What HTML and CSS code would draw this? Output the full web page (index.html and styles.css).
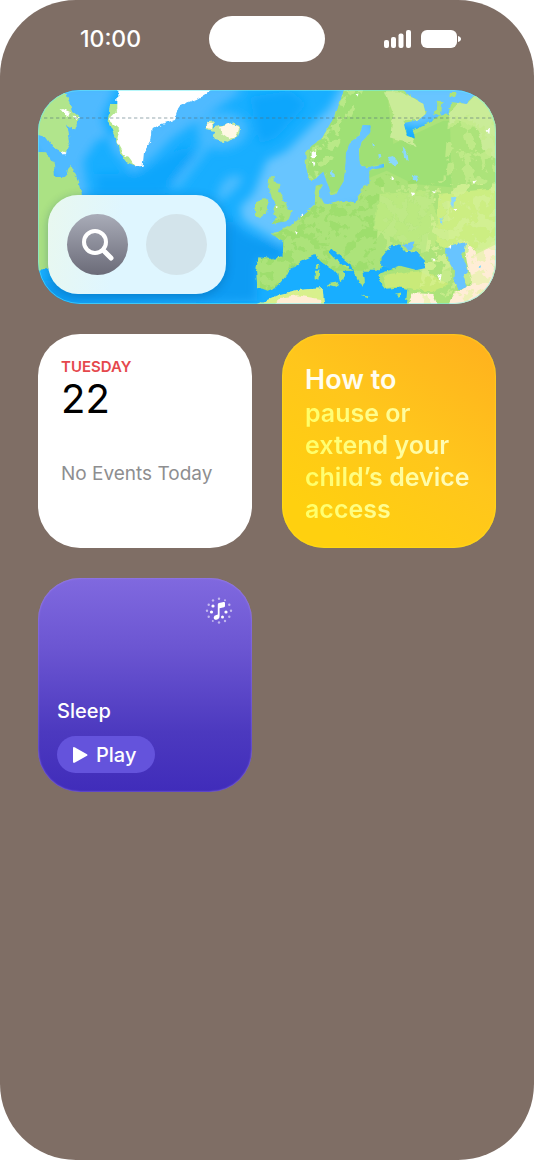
FILE: index.html
```html
<!DOCTYPE html>
<html lang="en">
<head>
    <meta charset="UTF-8">
    <meta name="viewport" content="width=device-width, initial-scale=1.0">
    <title>Today View</title>
    <link rel="stylesheet" href="styles.css">
</head>
<body>
    <div class="phone">
        <header class="status-bar">
            <time class="clock">10:00</time>
            <div class="island"></div>
            <div class="indicators">
                <svg width="28" height="20" viewBox="0 0 28 20" fill="#fff" aria-label="Signal">
                    <rect x="0" y="11" width="5" height="8" rx="2"/>
                    <rect x="7" y="8" width="5" height="11" rx="2"/>
                    <rect x="14.500" y="4.500" width="5" height="14.500" rx="2"/>
                    <rect x="22" y="1" width="5" height="18" rx="2"/>
                </svg>
                <svg width="40" height="20" viewBox="0 0 40 20" fill="#fff" aria-label="Battery">
                    <rect x="0" y="1" width="36" height="18" rx="6"/>
                    <path d="M37 7c4 1 4 5 0 6z"/>
                </svg>
            </div>
        </header>

        <main class="widgets">
            <section class="widget map">
                <svg class="map-art" viewBox="24 18 1374 642" preserveAspectRatio="none" aria-hidden="true">
                    <defs>
                        <filter id="soft" x="-10%" y="-10%" width="120%" height="120%">
                            <feGaussianBlur stdDeviation="14"/>
                        </filter>
                        <filter id="coast" x="-5%" y="-5%" width="110%" height="110%">
                            <feTurbulence type="fractalNoise" baseFrequency="0.05" numOctaves="3" seed="4"/>
                            <feDisplacementMap in="SourceGraphic" scale="15" xChannelSelector="R" yChannelSelector="G"/>
                        </filter>
                        <filter id="patches" x="0" y="0" width="100%" height="100%" color-interpolation-filters="sRGB">
                            <feTurbulence type="fractalNoise" baseFrequency="0.03" numOctaves="4" seed="8"/>
                            <feColorMatrix values="0 0 0 0 0  0 0 0 0 0  0 0 0 0 0  22 0 0 0 -11.5" result="noise"/>
                            <feComposite in="SourceGraphic" in2="noise" operator="in"/>
                        </filter>
                        <clipPath id="land">
                            <path id="europe" d="M948 0L930 55 915 95 895 130 875 165 845 185 826 208 828 250 838 285 855 285 880 262 890 290 905 332 922 325 940 292 945 255 948 205 960 175 985 155 998 122 1022 124 1022 145 995 175 987 210 990 240 1010 250 1065 238 1062 250 1018 260 1018 300 1000 305 990 335 975 355 935 350 905 360 875 354 865 325 878 300 858 305 852 340 855 362 820 395 785 420 750 440 725 452 760 470 758 520 725 525 685 520 678 560 682 608 712 620 740 608 765 580 775 560 800 545 815 530 855 512 870 530 895 550 925 568 930 592 945 580 940 560 968 560 940 545 915 525 895 505 905 492 930 515 960 540 980 580 995 608 1005 595 1000 560 1040 560 1058 545 1090 555 1045 570 1048 590 1065 612 1105 608 1132 615 1125 690H1430V60L1350 18 1330 40 1310 60 1265 55 1255 90 1225 96 1180 125 1150 140 1155 165 1130 155 1122 120 1160 112 1187 90 1180 60 1140 36 1100 0Z"/>
                            <path d="M718 280L735 280 730 295 748 300 745 320 765 350 775 375 785 382 775 410 725 420 742 400 725 390 738 365 722 330 715 305Z"/>
                            <path d="M705 342L714 350 710 385 690 402 675 395 675 355 690 345Z"/>
                        </clipPath>
                    </defs>
                    <rect x="24" y="18" width="1374" height="642" fill="#18aeff"/>
                    <g filter="url(#soft)">
                        <path fill="#4fbaff" d="M0 0H262L215 100 250 200 310 265 370 220 430 160 520 100 640 18 600 0H480L380 110 200 170 160 230 175 340 110 350 0 180Z"/>
                        <path fill="#45b9ff" d="M500 120Q520 80 600 85 680 110 640 170 590 210 540 190L450 310 420 310 510 190Z"/>
                        <path fill="#67c5ff" d="M940 0L900 70 810 160 770 200 710 230 670 330 630 370 640 410 690 440 760 480 880 390 1030 360 1080 200 1010 90 1160 130 1430 60V0H1110L1020 30Z"/>
                        <path fill="#4bbcff" d="M570 310Q590 260 640 280 610 340 560 350Z"/>
                        <path fill="#0e9bf3" d="M590 400L650 450 755 490 765 530 680 525 680 650 0 670 40 590 560 580Z"/>
                        <path fill="#11a6fc" d="M200 270L330 270 460 190 500 210 400 330 200 330ZM660 40L780 20 830 60 740 160 690 180Z"/>
                    </g>
                    <g filter="url(#coast)">
                        <path fill="#b1e58c" d="M0 30H110L125 80 148 98 135 135 112 122 120 175 104 208 70 190 48 160 0 145Z"/>
                        <path fill="#abe284" d="M0 202L48 205 72 240 75 278 105 280 122 242 140 280 155 330 165 400 60 555 0 558Z"/>
                        <path fill="#b4e78e" d="M270 0L270 60 240 60 233 112 255 160 268 205 290 235 325 248 300 100Z"/>
                        <path fill="#fff" d="M262 0H555L540 20 500 45 455 62 440 85 432 108 395 120 365 135 360 175 342 205 338 245 318 248 296 218 280 212 260 175 268 135 235 105 262 78Z"/>
                        <path fill="#fff" d="M92 72L122 85 116 98 100 90ZM130 98l16 2-6 8ZM92 200l15 6-5 6Z"/>
                        <path fill="#c5e9a0" d="M530 115L552 112 552 130 600 120 610 108 615 125 632 128 625 155 590 176 555 168 545 150 555 142 530 135Z"/>
                        <path fill="#fff8e5" d="M532 115l18 3-6 14-14-4ZM570 130L600 118 628 132 618 158 595 165 575 150Z"/>
                        <g fill="#ace37a">
                            <use href="#europe"/>
                            <path d="M718 280L735 280 730 295 748 300 745 320 765 350 775 375 785 382 775 410 725 420 742 400 725 390 738 365 722 330 715 305Z"/>
                            <path d="M705 342L714 350 710 385 690 402 675 395 675 355 690 345Z"/>
                            <path d="M895 600L925 595 920 612 895 605ZM854 560L868 560 865 588 854 586ZM857 540h8v14h-8ZM1095 632l18-4-6 10ZM990 632l30 2-4 6ZM1220 50l18 2-6 44-18-8 8-22ZM1260 24l20 0-6 18-16-4Z"/>
                        </g>
                        <path fill="#d8f08c" d="M670 690L680 660 750 630 800 618 878 612 885 690Z"/>
                        <path fill="#ffedd4" d="M735 690V660L760 640 800 634 870 645 880 690Z"/>
                    </g>
                    <g clip-path="url(#land)">
                        <path fill="#9fe075" d="M940 18H1070L1090 180 1240 110H1260L1265 310 1150 300 1070 260 900 330 830 280 840 190Z"/>
                        <g filter="url(#coast)">
                            <path fill="#caec98" d="M1065 22H1110L1190 60 1180 112 1120 110 1140 150 1160 190 1120 170 1080 160 1090 90Z"/>
                            <path fill="#caec98" d="M1255 90L1310 30 1430 30V240L1365 210 1340 130 1280 110 1255 130Z"/>
                            <path fill="#bbe980" d="M1050 330L1190 320 1230 420 1215 490 1100 470 1030 430Z"/>
                            <path fill="#ccee82" d="M1225 330L1430 310V490L1250 500 1220 470Z"/>
                            <path fill="#c9ea79" d="M1060 575L1180 560 1260 600 1200 625 1140 612 1070 610Z"/>
                            <path fill="#ffedd6" d="M1300 470L1340 500 1370 490 1430 450V690H1240L1280 620 1325 600 1310 530Z"/>
                            <path fill="#fff0da" d="M1115 690L1150 628 1210 630 1235 690Z"/>
                        </g>
                        <path filter="url(#patches)" fill="#98dc68" fill-opacity=".7" d="M690 370L900 350 1070 270 1250 300 1260 560 900 560 690 640Z"/>
                        <path filter="url(#patches)" fill="#c4eb8c" fill-opacity=".8" d="M1050 310L1240 290 1255 100 1400 80V480L1200 580 1040 480Z"/>
                        <path filter="url(#patches)" fill="#ddf49a" fill-opacity=".5" d="M1220 300H1400V660H1160Z"/>
                        <path filter="url(#patches)" fill="#c5ec8e" fill-opacity=".7" d="M900 18H1000L880 290 820 280Z"/>
                    </g>
                    <g filter="url(#coast)">
                        <path fill="#27aefc" d="M1053 545L1055 520 1075 495 1085 482 1108 485 1125 505 1155 500 1185 530 1188 552 1160 558 1110 545 1085 555Z"/>
                        <path fill="#68c4ff" d="M1118 482l35-10-2 18-18 12ZM1250 490L1280 480 1308 475 1305 500 1290 510 1308 540 1315 560 1300 575 1310 608 1285 615 1270 590 1272 560 1255 530 1245 505Z"/>
                        <path fill="#8ad8fc" d="M1075 220l14-4 14 22-8 10-18-12ZM1118 190l14 16 4 26-14-14ZM1150 272l14 4-6 14-10-6ZM1260 340l20-2-8 12-2 20-8-8ZM900 265l8-4 4 14-10 4ZM1045 208l10-2 2 12-10 6ZM1232 400l6 0-2 22-6-4ZM1345 540l10 2-4 10-8-2ZM1030 180l8 4-6 8Z"/>
                        <path fill="#fff" d="M845 203l12-4 0 20-12 0ZM848 232l8 4-4 14ZM1085 275l8 10-8 6ZM1145 325l10 2-4 10ZM1208 318l12 2-2 8ZM1255 485l12-4-6 14ZM814 392l8-6-4 14ZM740 365l6 4-4 6ZM792 440l8 4-4 8ZM1330 290l14-4-10 10ZM1370 140l10-10-2 20ZM1270 372l14 0-8 6ZM980 28l8-2-2 12ZM1200 522l20 4-8 6ZM1220 570l14 6-4 14Z"/>
                    </g>
                    <path class="arctic-circle" d="M24 102H1398"/>
                </svg>
                <div class="map-actions">
                    <button class="round-button search" aria-label="Search">
                        <svg width="32" height="32" viewBox="0 0 32 32" fill="none" stroke="#fff" stroke-linecap="round" aria-hidden="true">
                            <circle cx="13" cy="13" r="11" stroke-width="4"/>
                            <path d="M21 21l1.500 1.500" stroke-width="4"/>
                            <path d="M23 23l6 6" stroke-width="5"/>
                        </svg>
                    </button>
                    <button class="round-button" aria-label="Empty shortcut"></button>
                </div>
            </section>

            <section class="widget calendar">
                <h2>TUESDAY</h2>
                <p class="date">22</p>
                <p class="events">No Events Today</p>
            </section>

            <section class="widget tips">
                <h2>How to</h2>
                <p>pause or<br>extend your<br>child’s device<br>access</p>
            </section>

            <section class="widget sleep">
                <svg class="music-icon" width="28" height="28" viewBox="0 0 28 28" fill="#fff" aria-hidden="true">
                    <path d="M12.800 7.500Q12.800 6.400 14 6.100L18.600 5Q20 4.700 20 6V9Q20 9.900 19 10.200L14.600 11.300V18.800Q14.600 22.500 11.300 22.700 8.700 22.700 8.700 20.400 8.900 18.500 11.400 18L12.800 17.600Z"/>
                    <circle cx="8" cy="9" r="1.600"/>
                    <circle cx="6.500" cy="15" r="1.600"/>
                    <circle cx="21" cy="15" r="1.600"/>
                    <circle cx="17.500" cy="20" r="1.500"/>
                    <g fill-opacity=".55">
                        <circle cx="14" cy="1.700" r="1.200"/>
                        <circle cx="20" cy="3.200" r="1"/>
                        <circle cx="24.300" cy="7.700" r="1.200"/>
                        <circle cx="26" cy="13.800" r="1.200"/>
                        <circle cx="24.300" cy="19.700" r="1.200"/>
                        <circle cx="20" cy="24" r="1.200"/>
                        <circle cx="14" cy="25.500" r="1.200"/>
                        <circle cx="7.800" cy="24" r="1"/>
                        <circle cx="3.700" cy="19.700" r="1.200"/>
                        <circle cx="2" cy="13.800" r="1.200"/>
                        <circle cx="3.700" cy="7.700" r="1.200"/>
                        <circle cx="8" cy="3.400" r="1.200"/>
                    </g>
                </svg>
                <h2>Sleep</h2>
                <button class="play">
                    <svg width="15" height="16" viewBox="0 0 15 16" fill="#fff" aria-hidden="true">
                        <path d="M0 1.500Q0-.600 2 .500L14 7.200Q15 8 14 8.800L2 15.500Q0 16.600 0 14.500Z"/>
                    </svg>
                    Play
                </button>
            </section>
        </main>
    </div>
</body>
</html>
```
FILE: styles.css
```css
* {
    box-sizing: border-box;
    margin: 0;
    padding: 0;
}

body {
    font-family: Inter, "Liberation Sans", sans-serif;
    background-color: #fff;
}

button {
    border: none;
    font-family: inherit;
    cursor: pointer;
}

.phone {
    min-height: 100vh;
    background-color: #7f6e65;
    border-radius: 76px;
}

.status-bar {
    display: grid;
    grid-template-columns: 1fr 116px 1fr;
    align-items: center;
    padding: 16px 73px 28px;
}

.clock {
    padding-left: 7px;
    color: #fff;
    font-size: 23px;
    font-weight: 500;
}

.island {
    height: 46px;
    border-radius: 23px;
    background-color: #fff;
}

.indicators {
    display: flex;
    justify-content: flex-end;
    gap: 9px;
}

.widgets {
    display: grid;
    grid-template-columns: 1fr 1fr;
    gap: 30px;
    padding: 0 38px 38px;
}

.widget {
    position: relative;
    display: flex;
    flex-direction: column;
    aspect-ratio: 1;
    border-radius: 42px;
    overflow: hidden;
}

.widget h2 {
    font-weight: 600;
}

/* Map */
.map {
    grid-column: 1 / -1;
    aspect-ratio: 458 / 214;
    justify-content: flex-end;
    align-items: flex-start;
    padding: 10px;
}

.map::after {
    content: "";
    position: absolute;
    inset: 0;
    border: 1px solid rgba(110, 240, 245, 0.5);
    border-radius: inherit;
    pointer-events: none;
}

.map-art {
    position: absolute;
    inset: 0;
    width: 100%;
    height: 100%;
}

.arctic-circle {
    fill: none;
    stroke: rgba(80, 110, 120, 0.4);
    stroke-width: 4;
    stroke-dasharray: 10 8;
}

.map-actions {
    position: relative;
    display: flex;
    gap: 18px;
    padding: 19px;
    border-radius: 30px;
    background: linear-gradient(100deg, #e9f8ef, #dff6ff 40%);
    box-shadow: 0 2px 10px rgba(0, 60, 110, 0.3);
}

.round-button {
    display: flex;
    align-items: center;
    justify-content: center;
    width: 61px;
    height: 61px;
    border-radius: 50%;
    background-color: #d3e4eb;
}

.search {
    background: linear-gradient(#a9acb8, #6b6b78);
}

/* Calendar */
.calendar {
    padding: 25px 23px;
    background-color: #fff;
}

.calendar h2 {
    color: #e5484d;
    font-size: 15px;
    line-height: 16px;
}

.date {
    color: #000;
    font-size: 40px;
    line-height: 48px;
}

.events {
    margin-top: 39px;
    color: #8e8e90;
    font-size: 19px;
    line-height: 24px;
    white-space: nowrap;
}

/* Tips */
.tips {
    padding: 30px 23px;
    background: linear-gradient(35deg, #ffd00f 15%, #ffc61c 55%, #ffb01e);
    box-shadow: inset 0 0 2px #ffee20;
    font-size: 25px;
    line-height: 32px;
    white-space: nowrap;
}

.tips h2 {
    color: #fffdf0;
    font-size: 27px;
}

.tips p {
    padding-top: 1px;
    font-weight: 600;
    color: transparent;
    background: linear-gradient(90deg, #ffff66, #fffbc4);
    -webkit-background-clip: text;
    background-clip: text;
}

/* Sleep */
.sleep {
    justify-content: flex-end;
    align-items: flex-start;
    padding: 19px;
    background: linear-gradient(#8069df, #6c56d2 32%, #4c39bf 72%, #402cba);
    box-shadow: inset 0 0 2px #ab8df0;
    color: #fff;
}

.music-icon {
    margin: 0 0 auto auto;
}

.sleep h2 {
    margin-bottom: 12px;
    font-size: 20px;
    font-weight: 500;
    line-height: 26px;
}

.play {
    display: flex;
    align-items: center;
    gap: 8px;
    height: 37px;
    padding: 0 19px 0 16px;
    border-radius: 19px;
    background-color: #6453dc;
    color: #fff;
    font-size: 20px;
    font-weight: 500;
}
```
